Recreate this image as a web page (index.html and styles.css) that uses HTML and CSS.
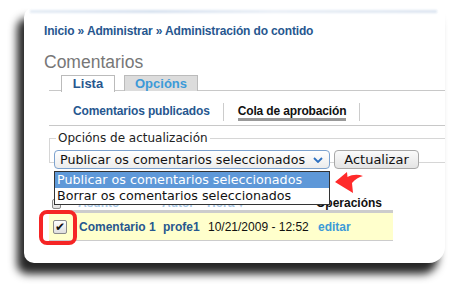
FILE: index.html
```html
<!DOCTYPE html>
<html lang="gl">
<head>
    <meta charset="UTF-8">
    <title>Comentarios</title>
    <link rel="stylesheet" href="styles.css">
</head>
<body>

<div class="shot">
    <div class="cutoff"></div>

    <div class="crumbs">
        <a href="#">Inicio</a> » <a href="#">Administrar</a> » <a href="#">Administración do contido</a>
    </div>

    <h1>Comentarios</h1>

    <ul class="tabs">
        <li class="active"><a href="#">Lista</a></li>
        <li><a href="#">Opcións</a></li>
    </ul>

    <ul class="subtabs">
        <li><a href="#">Comentarios publicados</a></li>
        <li class="active"><a href="#">Cola de aprobación</a></li>
    </ul>

    <fieldset class="options">
        <legend>Opcións de actualización</legend>
        <div class="select">
            <span>Publicar os comentarios seleccionados</span>
            <svg width="10" height="6" viewBox="0 0 10 6"><path d="M1 1 L5 5 L9 1" fill="none" stroke="#2c6fc0" stroke-width="1.8"/></svg>
        </div>
        <button class="btn">Actualizar</button>
    </fieldset>

    <ul class="popup">
        <li class="hover">Publicar os comentarios seleccionados</li>
        <li>Borrar os comentarios seleccionados</li>
    </ul>

    <table class="comments">
        <colgroup>
            <col style="width: 26px">
            <col style="width: 84px">
            <col style="width: 45px">
            <col style="width: 110px">
            <col style="width: 79px">
        </colgroup>
        <tr class="head">
            <th class="check"><span class="box small"></span></th>
            <th>Asunto</th>
            <th>Autor</th>
            <th>Hora ▾</th>
            <th class="ops">Operacións</th>
        </tr>
        <tr class="row">
            <td class="check"><span class="box">&#10004;</span></td>
            <td><a href="#">Comentario 1</a></td>
            <td><a href="#">profe1</a></td>
            <td class="date">10/21/2009 - 12:52</td>
            <td><a class="light" href="#">editar</a></td>
        </tr>
    </table>

    <!-- annotations drawn over the capture -->
    <div class="mark"></div>
    <svg class="arrow" width="28" height="21" viewBox="0 0 28 21">
        <path d="M0 10 L12 0 L12.5 5 C17 2.5 23 2 28 4 C24 5 20 7.5 17 11 L18 21 Z" fill="#ff2a2a"/>
    </svg>
</div>

</body>
</html>
```

FILE: styles.css
```css
body {
    margin: 0;
    background-color: #ffffff;
    font-family: "Liberation Sans", Arial, sans-serif;
    width: 453px;
    height: 287px;
    overflow: hidden;
}
a {
    text-decoration: none;
    color: #27578f;
}
ul {
    list-style: none;
    margin: 0;
    padding: 0;
}
.shot {
    position: relative;
    margin: 7px 0 0 24px;
    width: 421px;
    height: 256px;
    background-color: #ffffff;
    border-radius: 10px 6px 16px 10px;
    box-shadow: -7px 11px 9px rgba(0, 0, 0, 0.85);
    overflow: hidden;
    box-sizing: border-box;
    padding-top: 3px;
}
.cutoff {
    height: 3px;
    margin: 0 8px 0 6px;
    background: linear-gradient(90deg, #d8e3f0, #c3d3e8 30%, #dfe7f2 60%, #ccd9ea);
    filter: blur(1px);
    opacity: 0.7;
}
.crumbs {
    margin: 11px 0 0 20px;
    font-size: 12px;
    font-weight: bold;
    line-height: 15px;
    color: #27578f;
    letter-spacing: -0.15px;
}
h1 {
    margin: 13px 0 0 20px;
    font-size: 17.5px;
    font-weight: normal;
    line-height: 20px;
    color: #777777;
}
.tabs {
    display: flex;
    gap: 9px;
    margin: 3px 0 0 25px;
    padding-left: 12px;
    border-bottom: 1px solid #c8c8c8;
    height: 15px;
}
.tabs li {
    border: 1px solid #bbbbbb;
    border-bottom: none;
    height: 15px;
    font-size: 13px;
    font-weight: bold;
    line-height: 16px;
    text-align: center;
}
.tabs li a {
    color: #3c9ad8;
}
.tabs li:first-child {
    width: 52px;
}
.tabs li:last-child {
    width: 72px;
    background-color: #dcdcdc;
}
.tabs li.active {
    background-color: #ffffff;
    height: 16px;
}
.tabs li.active a {
    color: #27578f;
}
.subtabs {
    display: flex;
    margin: 0 0 0 25px;
    padding: 12px 0 4px 0;
    border-bottom: 1px solid #c8c8c8;
    font-size: 12px;
    font-weight: bold;
    letter-spacing: -0.15px;
}
.subtabs li {
    border-right: 1px solid #cccccc;
    line-height: 16px;
}
.subtabs li:first-child {
    padding: 0 13px 0 24px;
}
.subtabs li:last-child {
    padding: 0 13px 0 14px;
}
.subtabs li.active a {
    color: #111111;
    border-bottom: 3px solid #999999;
    display: inline-block;
    line-height: 14px;
}
.options {
    margin: 5px -10px 0 25px;
    padding: 5px 0 7px 4px;
    border: 1px solid #d6d6d6;
    display: flex;
    gap: 4px;
    height: 18px;
    font-family: "DejaVu Sans", sans-serif;
}
.options legend {
    margin-left: 2px;
    padding: 0 2px;
    font-size: 12px;
    color: #222222;
}
.select {
    width: 276px;
    height: 19px;
    box-sizing: border-box;
    border: 1px solid #7da2ce;
    border-radius: 4px;
    background: linear-gradient(#ffffff, #ececec);
    display: flex;
    align-items: center;
    justify-content: space-between;
    padding: 0 6px 0 5px;
    font-size: 12.7px;
    color: #111111;
}
.btn {
    width: 85px;
    height: 19px;
    padding: 0;
    border: 1px solid #a8a8a8;
    border-radius: 4px;
    background: linear-gradient(#fafafa, #e4e4e4);
    font-family: "DejaVu Sans", sans-serif;
    font-size: 13px;
    color: #111111;
}
.popup {
    position: absolute;
    left: 30px;
    top: 164px;
    width: 276px;
    box-sizing: border-box;
    border: 1px solid #333333;
    background-color: #ffffff;
    font-family: "DejaVu Sans", sans-serif;
    font-size: 12.7px;
    color: #111111;
    z-index: 2;
}
.popup li {
    height: 16px;
    line-height: 16px;
    padding-left: 2px;
}
.popup li.hover {
    background-color: #5e98d8;
    color: #ffffff;
}
.comments {
    margin: 31px 0 0 25px;
    width: 344px;
    table-layout: fixed;
    border-collapse: collapse;
    font-size: 12px;
}
.comments th {
    text-align: left;
    font-weight: bold;
    color: #a9c8e6;
    height: 16px;
    border-bottom: 3px solid #cccccc;
    padding: 0 0 0 3px;
    white-space: nowrap;
    vertical-align: bottom;
}
.comments th.ops {
    color: #111111;
    padding-left: 2px;
}
.comments .row td {
    background-color: #ffffcc;
    height: 27px;
    border-bottom: 1px solid #cccccc;
    padding: 0 0 0 4px;
    font-weight: bold;
    white-space: nowrap;
}
.comments .row td.date {
    font-weight: normal;
    color: #111111;
}
.comments .check {
    padding-left: 3px;
}
.comments a.light {
    color: #3c9ad8;
}
.box {
    display: inline-block;
    width: 14px;
    height: 14px;
    box-sizing: border-box;
    border: 1px solid #8a8a8a;
    border-radius: 2px;
    background: linear-gradient(#ffffff, #dedede);
    font-family: "DejaVu Sans", sans-serif;
    font-size: 12px;
    font-weight: bold;
    line-height: 12px;
    text-align: center;
    color: #111111;
    vertical-align: middle;
}
.box.small {
    width: 9px;
    height: 10px;
}
.mark {
    position: absolute;
    left: 15px;
    top: 203px;
    width: 38px;
    height: 35px;
    box-sizing: border-box;
    border: 4px solid #f52525;
    border-radius: 8px;
    z-index: 3;
}
.arrow {
    position: absolute;
    left: 311px;
    top: 165px;
    z-index: 3;
}
```
